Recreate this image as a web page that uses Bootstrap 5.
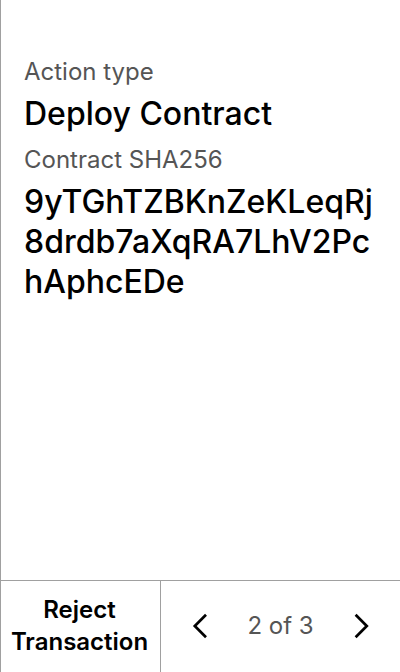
<!DOCTYPE html>
<html lang="en">
<head>
<meta charset="utf-8">
<meta name="viewport" content="width=device-width, initial-scale=1">
<title>Review transaction</title>
<link href="https://cdn.jsdelivr.net/npm/bootstrap@5.3.0/dist/css/bootstrap.min.css" rel="stylesheet">
<style>
  body { font-family: Inter, sans-serif; color: #000; background: #fff; }
  .screen { border-left: 1px solid #a0a0a0; }
  .review { padding: 56px 23px 24px; }
  .review dt { font-size: 24px; line-height: 32px; font-weight: 400; color: #555; }
  .review dd { font-size: 32px; line-height: 40px; font-weight: 500; margin: 6px 0 10px; overflow-wrap: anywhere; }
  .actions { border-top: 1px solid #a0a0a0; height: 92px; }
  .reject { width: 160px; border-right: 1px solid #a0a0a0; font-size: 24px; line-height: 32px; font-weight: 600; padding: 0 2px 2px 0; }
  .pager { font-size: 24px; line-height: 32px; color: #555; padding: 0 19px 2px; }
  .step { width: 40px; height: 64px; color: #000; }
</style>
</head>
<body>
<div class="screen d-flex flex-column min-vh-100">
  <main class="flex-grow-1">
    <dl class="review mb-0">
      <dt>Action type</dt>
      <dd>Deploy Contract</dd>
      <dt>Contract SHA256</dt>
      <dd>9yTGhTZBKnZeKLeqRj8drdb7aXqRA7LhV2PchAphcEDe</dd>
    </dl>
  </main>
  <footer class="actions d-flex">
    <button type="button" class="reject btn rounded-0 border-top-0 border-bottom-0 border-start-0 text-black flex-shrink-0">Reject Transaction</button>
    <nav class="pager d-flex flex-grow-1 align-items-center justify-content-between" aria-label="Pages">
      <button type="button" class="step btn border-0 p-0 d-flex align-items-center justify-content-center" aria-label="Previous page">
        <svg width="40" height="40" viewBox="0 0 40 40" fill="none" stroke="currentColor" stroke-width="2.7" aria-hidden="true"><path d="M26 8.8L14.8 20L26 31.2"/></svg>
      </button>
      <span>2 of 3</span>
      <button type="button" class="step btn border-0 p-0 d-flex align-items-center justify-content-center" aria-label="Next page">
        <svg width="40" height="40" viewBox="0 0 40 40" fill="none" stroke="currentColor" stroke-width="2.7" aria-hidden="true"><path d="M14.6 8.8L25.8 20L14.6 31.2"/></svg>
      </button>
    </nav>
  </footer>
</div>
<script src="https://cdn.jsdelivr.net/npm/bootstrap@5.3.0/dist/js/bootstrap.bundle.min.js"></script>
</body>
</html>
